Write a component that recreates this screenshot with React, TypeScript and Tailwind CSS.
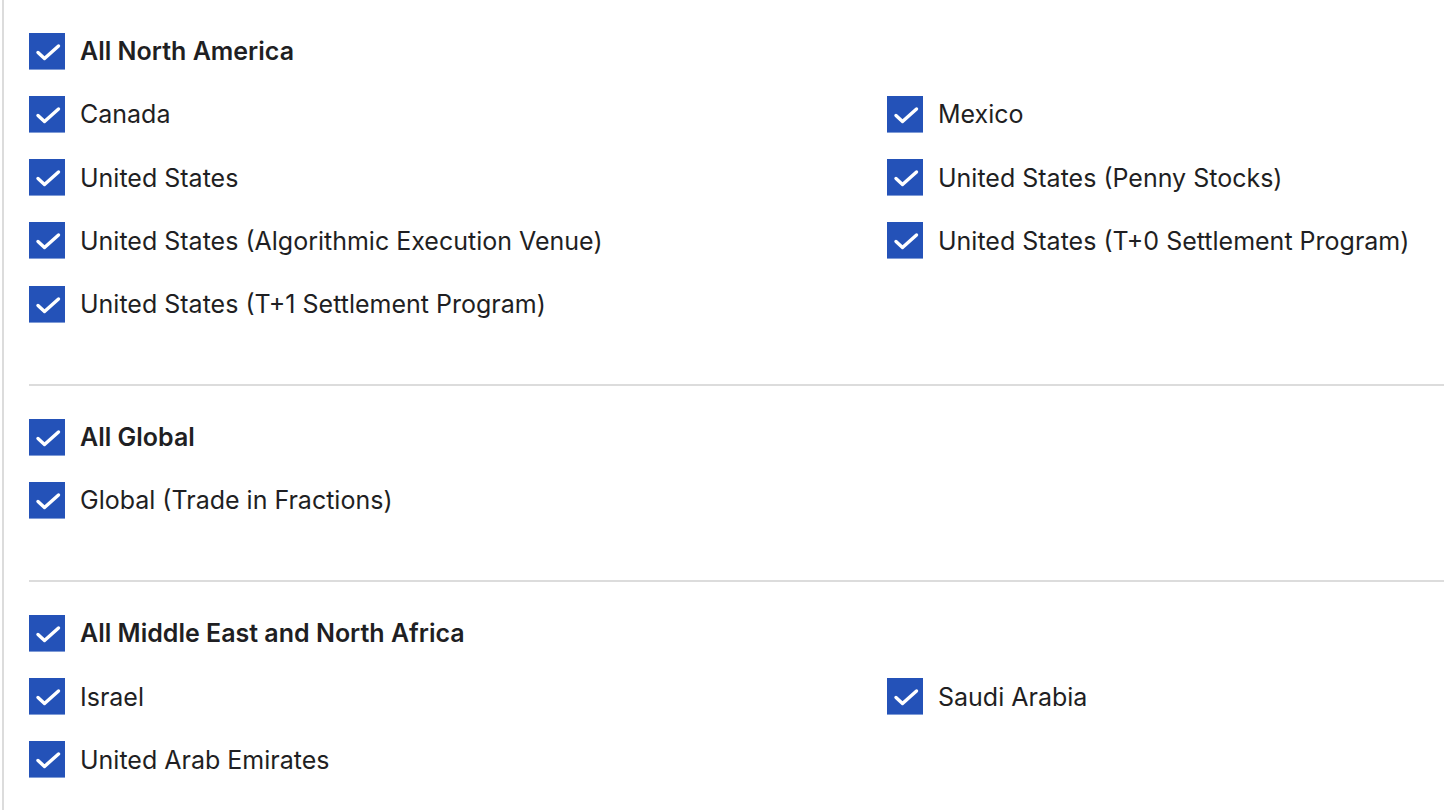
type Section = { title: string; items: [string, string | null][] };

const sections: Section[] = [
  {
    title: "All North America",
    items: [
      ["Canada", "Mexico"],
      ["United States", "United States (Penny Stocks)"],
      ["United States (Algorithmic Execution Venue)", "United States (T+0 Settlement Program)"],
      ["United States (T+1 Settlement Program)", null],
    ],
  },
  {
    title: "All Global",
    items: [["Global (Trade in Fractions)", null]],
  },
  {
    title: "All Middle East and North Africa",
    items: [
      ["Israel", "Saudi Arabia"],
      ["United Arab Emirates", null],
    ],
  },
];

function Check() {
  return (
    <span className="flex h-[37px] w-[36px] shrink-0 flex-col">
      <span className="flex h-[36px] w-[36px] items-center justify-center bg-[#2452b8]">
        <svg width="36" height="36" viewBox="0 0 36 36" fill="none">
          <polyline
            points="9,19.5 15.5,25.4 29.5,13"
            stroke="#ffffff"
            strokeWidth="3.4"
            strokeLinecap="round"
            strokeLinejoin="round"
          />
        </svg>
      </span>
      <span className="h-[1px] w-[36px] bg-[#7f9bd6]" />
    </span>
  );
}

function Item({ label, bold }: { label: string; bold?: boolean }) {
  return (
    <div className="flex h-[63.25px] items-center gap-[15px]">
      <Check />
      <span
        className={`mt-[1px] text-[25px] leading-none text-[#1f1f23] ${bold ? "font-semibold" : "font-normal"}`}
      >
        {label}
      </span>
    </div>
  );
}

export default function App() {
  return (
    <div
      className="ml-[2px] min-h-[810px] border-l-2 border-[#dcdcdc] bg-white pl-[25px]"
      style={{ fontFamily: "Inter, 'Liberation Sans', sans-serif" }}
    >
      {sections.map((s, i) => (
        <div
          key={s.title}
          className={`pb-[48.4px] pt-[19.4px] ${i > 0 ? "border-t-2 border-[#dcdcdc]" : ""}`}
        >
          <Item label={s.title} bold />
          <div className="grid grid-cols-[858px_1fr]">
            {s.items.flatMap(([a, b]) => [
              <Item key={a} label={a} />,
              b ? <Item key={b} label={b} /> : <div key={a + "-empty"} />,
            ])}
          </div>
        </div>
      ))}
    </div>
  );
}
